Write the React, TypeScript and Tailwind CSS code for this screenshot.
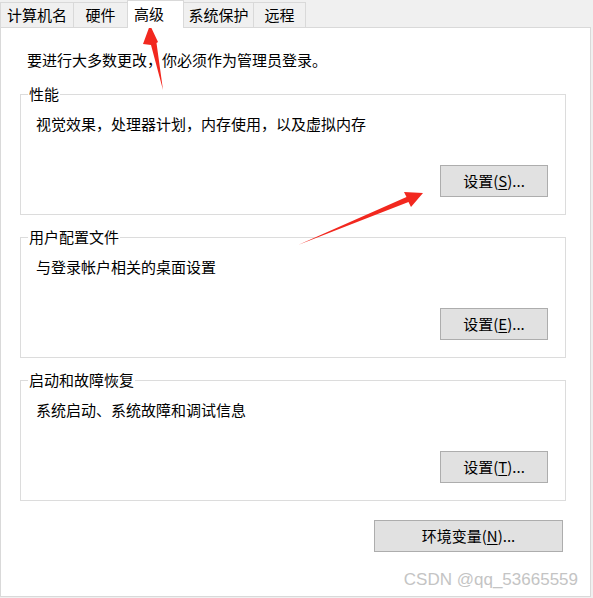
import React from 'react';

const tabs = [
  { label: '计算机名', cls: 'w-[74px] border-l' },
  { label: '硬件', cls: 'w-[54px]' },
  { label: '高级', cls: '', active: true },
  { label: '系统保护', cls: 'w-[70px]' },
  { label: '远程', cls: 'w-[52px]' },
];

function WinButton({ pre, letter, className }: { pre: string; letter: string; className: string }) {
  return (
    <button
      className={`flex items-center justify-center border border-[#adadad] bg-[#e1e1e1] text-[15px] text-black ${className}`}
    >
      {pre}(<span className="underline underline-offset-2">{letter}</span>)...
    </button>
  );
}

function GroupBox({ title, text, accel }: { title: string; text: string; accel: string }) {
  return (
    <div className="relative ml-[19px] w-[546px] h-[121px] border border-[#dcdcdc]">
      <span className="absolute -top-[11px] left-[7px] bg-white px-px leading-[20px]">{title}</span>
      <div className="pl-[15px] pt-[19px] leading-[20px]">{text}</div>
      <div className="flex justify-end pr-[17px] pt-[31px]">
        <WinButton pre="设置" letter={accel} className="w-[108px] h-[32px]" />
      </div>
    </div>
  );
}

export default function App() {
  return (
    <div
      className="relative w-[593px] h-[598px] overflow-hidden bg-[#f0f0f0] text-[15px] text-black"
      style={{ fontFamily: '"Noto Sans CJK SC", "Noto Sans", sans-serif' }}
    >
      {/* tab strip */}
      <div className="flex h-[27px] items-end">
        {tabs.map((t) =>
          t.active ? (
            <div
              key={t.label}
              className="relative z-10 -mb-px -ml-px flex h-[28px] w-[57px] items-start border border-b-0 border-[#d9d9d9] bg-white pl-[6px] pt-[3px] leading-[20px]"
            >
              {t.label}
            </div>
          ) : (
            <div
              key={t.label}
              className={`flex h-[25px] ${t.cls} items-center justify-center border-t border-r border-[#d9d9d9] bg-[#f0f0f0] leading-[20px]`}
            >
              {t.label}
            </div>
          )
        )}
      </div>

      {/* tab page */}
      <div className="w-[591px] h-[570px] border border-[#d9d9d9] bg-white">
        <div className="pl-[26px] pt-[22px] leading-[20px]">要进行大多数更改，你必须作为管理员登录。</div>
        <div className="mt-[24px] flex flex-col gap-[22px]">
          <GroupBox title="性能" text="视觉效果，处理器计划，内存使用，以及虚拟内存" accel="S" />
          <GroupBox title="用户配置文件" text="与登录帐户相关的桌面设置" accel="E" />
          <GroupBox title="启动和故障恢复" text="系统启动、系统故障和调试信息" accel="T" />
        </div>
        <div className="mt-[19px] flex justify-end pr-[27px]">
          <button className="flex h-[32px] w-[189px] items-center justify-center border border-[#adadad] bg-[#e1e1e1] text-[15px]">
            环境变量(<span className="underline underline-offset-2">N</span>)...
          </button>
        </div>
      </div>

      {/* annotation arrows */}
      <svg className="pointer-events-none absolute left-0 top-0" width="593" height="598">
        <polygon fill="#f2281f" points="163,90 156.5,43 158,42 150,25 143,44 151,45" />
        <polygon fill="#f2281f" points="298,245 408.5,202 411,207 423,193 404,192 406.5,197" />
      </svg>

      {/* watermark */}
      <div
        className="absolute right-[15px] top-[568px] text-[17px] leading-[24px] text-[#c4c4c4]"
        style={{ fontFamily: '"Liberation Sans", Arial, sans-serif' }}
      >
        CSDN @qq_53665559
      </div>
    </div>
  );
}
